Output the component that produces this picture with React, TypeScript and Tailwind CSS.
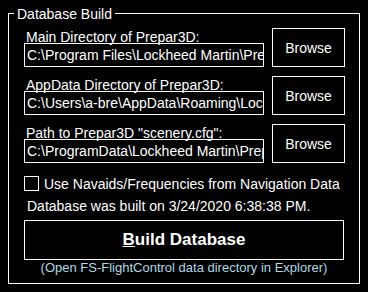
import React from 'react';

const paths = [
  {
    label: 'Main Directory of Prepar3D:',
    value: 'C:\\Program Files\\Lockheed Martin\\Prepar',
  },
  {
    label: 'AppData Directory of Prepar3D:',
    value: 'C:\\Users\\a-bre\\AppData\\Roaming\\Lockhe',
  },
  {
    label: 'Path to Prepar3D "scenery.cfg":',
    value: 'C:\\ProgramData\\Lockheed Martin\\Prepar',
  },
];

export default function App() {
  return (
    <div className="w-[368px] h-[292px] bg-black text-white font-['Liberation_Sans',Arial,sans-serif] text-[14px] leading-[16px] pt-[13px] pl-[8px] overflow-hidden">
      <div className="relative w-[352px] h-[271px] border border-white pt-[14px] pl-[15px]">
        {/* Group title */}
        <span className="absolute left-[5px] top-[-8px] px-[3px] bg-black">Database Build</span>

        {/* Path rows */}
        <div className="flex flex-col gap-[9px]">
          {paths.map((p) => (
            <div key={p.label} className="flex gap-[8px]">
              <div className="w-[240px] pt-[1px] flex flex-col">
                <div className="h-[14px] pl-[2px] whitespace-nowrap">{p.label}</div>
                <div className="h-[24px] border border-white flex items-center pl-[2px] overflow-hidden whitespace-nowrap">
                  {p.value}
                </div>
              </div>
              <button className="w-[73px] h-[39px] border border-white flex items-center justify-center">
                Browse
              </button>
            </div>
          ))}
        </div>

        {/* Option */}
        <div className="flex items-start gap-[5px] mt-[13px]">
          <div className="w-[15px] h-[15px] border border-white" />
          <span className="whitespace-nowrap">Use Navaids/Frequencies from Navigation Data</span>
        </div>

        <div className="mt-[6px] pl-[3px] whitespace-nowrap">Database was built on 3/24/2020 6:38:38 PM.</div>

        <button className="mt-[6px] w-[320px] h-[40px] border border-white flex items-center justify-center font-bold text-[17px]">
          <span>
            <span className="underline">B</span>uild Database
          </span>
        </button>

        <div className="w-[320px] text-center text-[13px] leading-[13px] mt-[1px] text-[#add8e6] whitespace-nowrap">
          (Open FS-FlightControl data directory in Explorer)
        </div>
      </div>
    </div>
  );
}
